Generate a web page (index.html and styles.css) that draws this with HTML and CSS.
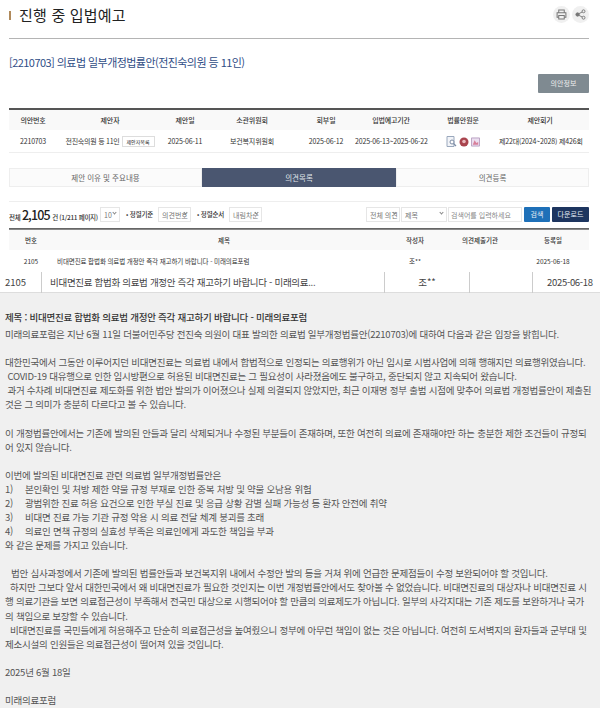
FILE: index.html
```html
<!DOCTYPE html>
<html lang="ko">
<head>
<meta charset="utf-8">
<title>진행 중 입법예고</title>
<link rel="stylesheet" href="styles.css">
</head>
<body>
<main class="top">
  <header class="page-head">
    <h1 class="page-title">진행 중 입법예고</h1>
    <div class="tools">
      <span class="tool"><svg viewBox="0 0 12 12" width="11" height="11" fill="none" stroke="#777" stroke-width="1.1"><path d="M3 4V1.2h6V4M3 9H1.2V4.2h9.6V9H9"/><path d="M3 7h6v3.8H3z"/></svg></span>
      <span class="tool"><svg viewBox="0 0 12 12" width="11" height="11" fill="none" stroke="#777" stroke-width="1"><circle cx="9.3" cy="2.5" r="1.6"/><circle cx="9.3" cy="9.5" r="1.6"/><circle cx="2.8" cy="6" r="1.8" fill="#777"/><path d="M4 5.2l4-2M4 6.8l4 2"/></svg></span>
    </div>
  </header>
  <h2 class="bill-title">[2210703] 의료법 일부개정법률안(전진숙의원 등 11인)</h2>
  <div class="bill-actions"><a class="btn-info">의안정보</a></div>

  <section class="info">
    <div class="info-row info-head">
      <span>의안번호</span><span>제안자</span><span>제안일</span><span>소관위원회</span><span>회부일</span><span>입법예고기간</span><span>법률안원문</span><span>제안회기</span>
    </div>
    <div class="info-row info-body">
      <span>2210703</span>
      <span class="proposer">전진숙의원 등 11인<em class="mini-btn">제안자목록</em></span>
      <span>2025-06-11</span><span>보건복지위원회</span><span>2025-06-12</span><span>2025-06-13~2025-06-22</span>
      <span class="files">
        <svg viewBox="0 0 11 11" width="11" height="11"><path d="M1 .5h7v10H1z" fill="#f2f4f8" stroke="#9aa8bd"/><circle cx="6" cy="6" r="2" fill="#fff" stroke="#7d8da5"/><path d="M7.5 7.5l2.5 2.5" stroke="#7d8da5" stroke-width="1.2"/></svg>
        <svg viewBox="0 0 10 10" width="10" height="10"><circle cx="5" cy="5" r="4.5" fill="#a9444e"/><circle cx="5" cy="4.5" r="1.8" fill="#e8b9bd"/></svg>
        <svg viewBox="0 0 10 10" width="9" height="10"><path d="M.5.5h9v9h-9z" fill="#ecdff0" stroke="#b59cc0"/><path d="M2 8l2-5 2 3 2-1v3z" fill="#d77f9a"/></svg>
      </span>
      <span>제22대(2024~2028) 제426회</span>
    </div>
  </section>

  <nav class="tabs">
    <a class="tab">제안 이유 및 주요내용</a>
    <a class="tab tab-on">의견목록</a>
    <a class="tab">의견등록</a>
  </nav>

  <div class="controls">
    <span class="total">전체 <b>2,105</b> 건 (1/211 페이지)</span>
    <span class="sel sel-num">10<i></i></span>
    <span class="lab">• 정렬기준</span>
    <span class="sel sel-sort">의견번호<i></i></span>
    <span class="lab">• 정렬순서</span>
    <span class="sel sel-sort">내림차순<i></i></span>
    <span class="spacer"></span>
    <span class="sel sel-all">전체 의견<i></i></span>
    <span class="sel sel-field">제목<i></i></span>
    <span class="search">검색어를 입력하세요</span>
    <a class="btn btn-search">검색</a>
    <a class="btn btn-down">다운로드</a>
  </div>

  <section class="list">
    <div class="list-row list-head"><span>번호</span><span>제목</span><span>작성자</span><span>의견제출기관</span><span>등록일</span></div>
    <div class="list-row list-body"><span>2105</span><span class="subject">비대면진료 합법화 의료법 개정안 즉각 재고하기 바랍니다 - 미래의료포럼</span><span>조**</span><span></span><span>2025-06-18</span></div>
  </section>
</main>

<div class="strip">
  <span class="s-no">2105</span>
  <span class="s-title">비대면진료 합법화 의료법 개정안 즉각 재고하기 바랍니다 - 미래의료...</span>
  <span class="s-writer">조**</span>
  <span class="s-org"></span>
  <span class="s-date">2025-06-18</span>
</div>

<article class="opinion">
<p class="op-title">제목 : 비대면진료 합법화 의료법 개정안 즉각 재고하기 바랍니다 - 미래의료포럼</p>
<p>미래의료포럼은 지난 6월 11일 더불어민주당 전진숙 의원이 대표 발의한 의료법 일부개정법률안(2210703)에 대하여 다음과 같은 입장을 밝힙니다.</p>
<p>&nbsp;</p>
<p>대한민국에서 그동안 이루어지던 비대면진료는 의료법 내에서 합법적으로 인정되는 의료행위가 아닌 임시로 시범사업에 의해 행해지던 의료행위였습니다.</p>
<p>&nbsp;COVID-19 대유행으로 인한 임시방편으로 허용된 비대면진료는 그 필요성이 사라졌음에도 불구하고, 중단되지 않고 지속되어 왔습니다.</p>
<p>&nbsp;과거 수차례 비대면진료 제도화를 위한 법안 발의가 이어졌으나 실제 의결되지 않았지만, 최근 이재명 정부 출범 시점에 맞추어 의료법 개정법률안이 제출된</p>
<p>것은 그 의미가 충분히 다르다고 볼 수 있습니다.</p>
<p>&nbsp;</p>
<p>이 개정법률안에서는 기존에 발의된 안들과 달리 삭제되거나 수정된 부분들이 존재하며, 또한 여전히 의료에 존재해야만 하는 충분한 제한 조건들이 규정되</p>
<p>어 있지 않습니다.</p>
<p>&nbsp;</p>
<p>이번에 발의된 비대면진료 관련 의료법 일부개정법률안은</p>
<p class="num"><span>1)</span>본인확인 및 처방 제한 약물 규정 부재로 인한 중복 처방 및 약물 오남용 위험</p>
<p class="num"><span>2)</span>광범위한 진료 허용 요건으로 인한 부실 진료 및 응급 상황 감별 실패 가능성 등 환자 안전에 취약</p>
<p class="num"><span>3)</span>비대면 진료 가능 기관 규정 악용 시 의료 전달 체계 붕괴를 초래</p>
<p class="num"><span>4)</span>의료인 면책 규정의 실효성 부족은 의료인에게 과도한 책임을 부과</p>
<p>와 같은 문제를 가지고 있습니다.</p>
<p>&nbsp;</p>
<p class="ind2">법안 심사과정에서 기존에 발의된 법률안들과 보건복지위 내에서 수정안 발의 등을 거쳐 위에 언급한 문제점들이 수정 보완되어야 할 것입니다.</p>
<p class="ind1">하지만 그보다 앞서 대한민국에서 왜 비대면진료가 필요한 것인지는 이번 개정법률안에서도 찾아볼 수 없었습니다. 비대면진료의 대상자나 비대면진료 시</p>
<p>행 의료기관을 보면 의료접근성이 부족해서 전국민 대상으로 시행되어야 할 만큼의 의료제도가 아닙니다. 일부의 사각지대는 기존 제도를 보완하거나 국가</p>
<p>의 책임으로 보장할 수 있습니다.</p>
<p class="ind1">비대면진료를 국민들에게 허용해주고 단순히 의료접근성을 높여줬으니 정부에 아무런 책임이 없는 것은 아닙니다. 여전히 도서벽지의 환자들과 군부대 및</p>
<p>제소시설의 인원들은 의료접근성이 떨어져 있을 것입니다.</p>
<p>&nbsp;</p>
<p>2025년 6월 18일</p>
<p>&nbsp;</p>
<p>미래의료포럼</p>
</article>
</body>
</html>
```
FILE: styles.css
```css
* { box-sizing: border-box; }
html, body { margin: 0; height: 708px; overflow: hidden; }
body { background: #f0f0f0; font-family: "Noto Sans CJK KR", "Noto Sans", sans-serif; color: #444; }
.top { background: #fff; height: 272px; padding: 0 11px 0 9px; }

.page-head { height: 39px; display: flex; justify-content: space-between; padding-top: 6px; border-bottom: 1px solid #b4b4b4; }
.page-title { margin: 0; height: 18px; font-size: 15px; line-height: 18px; font-weight: 400; color: #222; display: flex; align-items: center; letter-spacing: .2px; }
.page-title::before { content: ""; width: 2px; height: 9px; background: #b08a5b; margin-right: 8px; }
.tools { display: flex; gap: 2px; }
.tool { width: 17px; height: 17px; border-radius: 50%; background: #f0f0f0; display: flex; align-items: center; justify-content: center; }

.bill-title { margin: 16px 0 0; height: 15px; font-size: 11px; line-height: 15px; font-weight: 400; color: #2f4d86; letter-spacing: -.55px; }
.bill-actions { display: flex; justify-content: flex-end; margin-top: 4px; height: 34px; }
.btn-info { width: 51px; height: 19px; background: #7f8a91; color: #eee; font-size: 7px; line-height: 19px; text-align: center; border-radius: 1px; }

.info { border-top: 2px solid #555; }
.info-row { display: grid; grid-template-columns: 48px 106px 44px 90px 58px 72px 72px 90px; align-items: center; text-align: center; font-size: 7px; color: #333; white-space: nowrap; letter-spacing: -.15px; }
.info-row > span:last-child { padding-right: 8px; }
.info-head { height: 20px; background: #f9f9f9; font-weight: 500; line-height: 18px; }
.info-body { height: 23px; border-bottom: 1px solid #eee; }
.proposer { display: flex; align-items: center; justify-content: center; letter-spacing: -.25px; }
.mini-btn { font-style: normal; font-size: 5px; height: 11px; line-height: 9px; padding: 0 4px; border: 1px solid #ddd; margin-left: 2px; color: #222; letter-spacing: 0; }
.files { display: flex; align-items: center; justify-content: center; gap: 2px; padding-top: 1px; }

.tabs { display: grid; grid-template-columns: 193px 194px 193px; margin-top: 15px; height: 18px; }
.tab { font-size: 7.5px; line-height: 17px; text-align: center; color: #666; background: #fbfbfb; border: 1px solid #eee; }
.tab-on { background: #4a5670; color: #dfe2e8; border-color: #4a5670; }

.controls { margin-top: 15px; height: 27px; padding-top: 5px; border-top: 1px solid #eee; display: flex; align-items: flex-start; font-size: 7px; color: #333; white-space: nowrap; }
.total { width: 91px; height: 15px; line-height: 15px; font-size: 6.5px; font-weight: 500; letter-spacing: -.3px; }
.total b { font-size: 12.5px; font-weight: 500; color: #222; letter-spacing: -.9px; margin-right: 1px; }
.sel { height: 15px; line-height: 14px; border: 1px solid #e6e6e6; color: #777; font-size: 7px; padding-left: 3px; position: relative; display: block; }
.sel i { position: absolute; right: 3px; top: 3px; width: 3px; height: 3px; border-right: 1px solid #888; border-bottom: 1px solid #888; transform: rotate(45deg); }
.sel-num { width: 20px; margin-right: 6px; }
.lab { width: 28px; margin-right: 4px; line-height: 15px; font-size: 6.5px; font-weight: 500; letter-spacing: -.15px; }
.sel-sort { width: 33px; margin-right: 6px; }
.spacer { flex: 1; }
.sel-all { width: 34px; margin-right: 1px; }
.sel-field { width: 46px; margin-right: 1px; }
.search { width: 74px; height: 15px; line-height: 14px; border: 1px solid #e6e6e6; font-size: 7px; color: #888; padding-left: 2px; margin-right: 2px; }
.btn { height: 15px; line-height: 15px; text-align: center; color: #e8eef5; font-size: 7px; border-radius: 1px; }
.btn-search { width: 26px; background: #1e70b8; margin-right: 2px; }
.btn-down { width: 37px; background: #1d355f; }

.list { border-top: 1px solid #666; }
.list-row { display: grid; grid-template-columns: 44px 342px 40px 90px 64px; align-items: center; text-align: center; font-size: 6.5px; color: #333; white-space: nowrap; }
.list-row > span:last-child { padding-right: 8px; }
.list-head { height: 21px; background: #f9f9f9; font-weight: 500; border-top: 1px solid #888; line-height: 18px; }
.list-body { height: 22px; }
.subject { text-align: left; padding-left: 4px; letter-spacing: -.1px; }

.strip { height: 21px; background: #fff; border-bottom: 1px solid #ddd; display: flex; align-items: center; font-size: 9.5px; color: #444; white-space: nowrap; line-height: 20px; }
.strip span { height: 21px; }
.s-no { width: 42px; padding-left: 5px; border-right: 1px solid #ccc; }
.s-title { width: 342px; padding-left: 8px; letter-spacing: -.3px; }
.s-writer { width: 85px; text-align: center; border-left: 1px solid #ccc; }
.s-org { width: 63px; border-left: 1px solid #ccc; }
.s-date { flex: 1; padding-left: 14px; border-left: 1px solid #ccc; letter-spacing: -.3px; }

.opinion { padding: 16px 0 0 5px; font-size: 9.5px; line-height: 14.08px; color: #555; white-space: nowrap; letter-spacing: -.24px; }
.opinion p { margin: 0; height: 14.08px; }
.op-title { font-weight: 500; color: #333; height: 16px !important; line-height: 16px !important; margin-bottom: 2px !important; letter-spacing: -.24px; }
.num span { display: inline-block; width: 20px; }
.ind1 { padding-left: 5px; }
.ind2 { padding-left: 6px; }
```
